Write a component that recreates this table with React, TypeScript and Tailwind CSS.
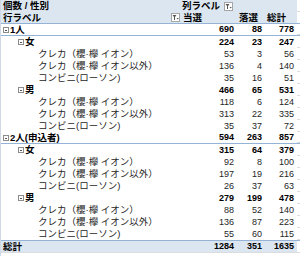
import React from "react";

type Item = {
  label: string;
  level: number;
  bold?: boolean;
  toggle?: boolean;
  line?: boolean;
  vals: number[];
};

const rows: Item[] = [
  { label: "1人", level: 0, bold: true, toggle: true, line: true, vals: [690, 88, 778] },
  { label: "女", level: 1, bold: true, toggle: true, vals: [224, 23, 247] },
  { label: "クレカ（櫻·欅 イオン）", level: 2, vals: [53, 3, 56] },
  { label: "クレカ（櫻·欅 イオン以外）", level: 2, vals: [136, 4, 140] },
  { label: "コンビニ(ローソン)", level: 2, vals: [35, 16, 51] },
  { label: "男", level: 1, bold: true, toggle: true, vals: [466, 65, 531] },
  { label: "クレカ（櫻·欅 イオン）", level: 2, vals: [118, 6, 124] },
  { label: "クレカ（櫻·欅 イオン以外）", level: 2, vals: [313, 22, 335] },
  { label: "コンビニ(ローソン)", level: 2, vals: [35, 37, 72] },
  { label: "2人(申込者)", level: 0, bold: true, toggle: true, line: true, vals: [594, 263, 857] },
  { label: "女", level: 1, bold: true, toggle: true, vals: [315, 64, 379] },
  { label: "クレカ（櫻·欅 イオン）", level: 2, vals: [92, 8, 100] },
  { label: "クレカ（櫻·欅 イオン以外）", level: 2, vals: [197, 19, 216] },
  { label: "コンビニ(ローソン)", level: 2, vals: [26, 37, 63] },
  { label: "男", level: 1, bold: true, toggle: true, vals: [279, 199, 478] },
  { label: "クレカ（櫻·欅 イオン）", level: 2, vals: [88, 52, 140] },
  { label: "クレカ（櫻·欅 イオン以外）", level: 2, vals: [136, 87, 223] },
  { label: "コンビニ(ローソン)", level: 2, vals: [55, 60, 115] },
];

const indent = ["pl-[2px]", "pl-[17px]", "pl-[37px]"];

const Minus = () => (
  <span className="relative inline-block w-[6px] h-[6px] border border-[#8c8c8c] bg-white mr-[1px] shrink-0">
    <span className="absolute left-[1px] right-[1px] top-[2px] h-px bg-[#555]" />
  </span>
);

const FilterBtn = () => (
  <span className="inline-flex items-center justify-center w-[9px] h-[9px] border border-[#a6a6a6] bg-white">
    <svg width="7" height="7" viewBox="0 0 7 7">
      <path d="M0.5 1 H4.5 L3 3 V6 H2 V3 Z" fill="#555" />
      <path d="M4.6 4 H6.8 L5.7 5.6 Z" fill="#555" />
    </svg>
  </span>
);

const Row = ({ r }: { r: Item }) => (
  <div
    className={`grid grid-cols-[180px_56px_28px_32px_4px] h-[12px] ${r.line ? "border-b border-[#95b3d7]" : ""} ${
      r.bold ? "font-bold text-black" : "text-[#262626]"
    }`}
  >
    <div className={`flex items-center whitespace-nowrap overflow-visible ${indent[r.level]}`}>
      {r.toggle && <Minus />}
      <span>{r.label}</span>
    </div>
    {r.vals.map((v, i) => (
      <div key={i} className="flex items-center justify-end pr-[3px] text-[9px]">
        {v}
      </div>
    ))}
    <div className="bg-white border-b border-[#dadcdd]" />
  </div>
);

export default function App() {
  return (
    <div
      className="w-[300px] h-[256px] overflow-hidden bg-white text-[9.5px] leading-none border-l border-[#d0d7e5]"
      style={{ fontFamily: '"Liberation Sans", "Noto Sans CJK JP", sans-serif' }}
    >
      <div className="grid grid-cols-[180px_56px_28px_32px_4px] h-[12px] font-bold text-black">
        <div className="flex items-center pl-[2px] bg-[#dce6f1]">個数 / 性別</div>
        <div className="col-span-3 flex items-center pl-[1px] gap-[4px] bg-[#dce6f1]">
          <span>列ラベル</span>
          <FilterBtn />
        </div>
        <div className="bg-white border-b border-[#dadcdd]" />
      </div>
      <div className="grid grid-cols-[180px_56px_28px_32px_4px] h-[12px] font-bold text-black border-b border-[#95b3d7]">
        <div className="flex items-center justify-between pl-[2px] pr-[1px] bg-[#dce6f1]">
          <span>行ラベル</span>
          <FilterBtn />
        </div>
        <div className="flex items-center pl-[2px] bg-[#dce6f1]">当選</div>
        <div className="flex items-center pl-[2px] bg-[#dce6f1]">落選</div>
        <div className="flex items-center pl-[2px] bg-[#dce6f1]">総計</div>
        <div className="bg-white" />
      </div>
      {rows.map((r, i) => (
        <Row key={i} r={r} />
      ))}
      <div className="grid grid-cols-[180px_56px_28px_32px_4px] h-[12px] font-bold text-black border-t border-[#95b3d7]">
        <div className="flex items-center pl-[2px] bg-[#dce6f1]">総計</div>
        <div className="flex items-center justify-end pr-[3px] text-[9px] bg-[#dce6f1]">1284</div>
        <div className="flex items-center justify-end pr-[3px] text-[9px] bg-[#dce6f1]">351</div>
        <div className="flex items-center justify-end pr-[3px] text-[9px] bg-[#dce6f1]">1635</div>
        <div className="bg-white" />
      </div>
      <div className="h-[4px] border-t border-[#dadcdd]" />
    </div>
  );
}
